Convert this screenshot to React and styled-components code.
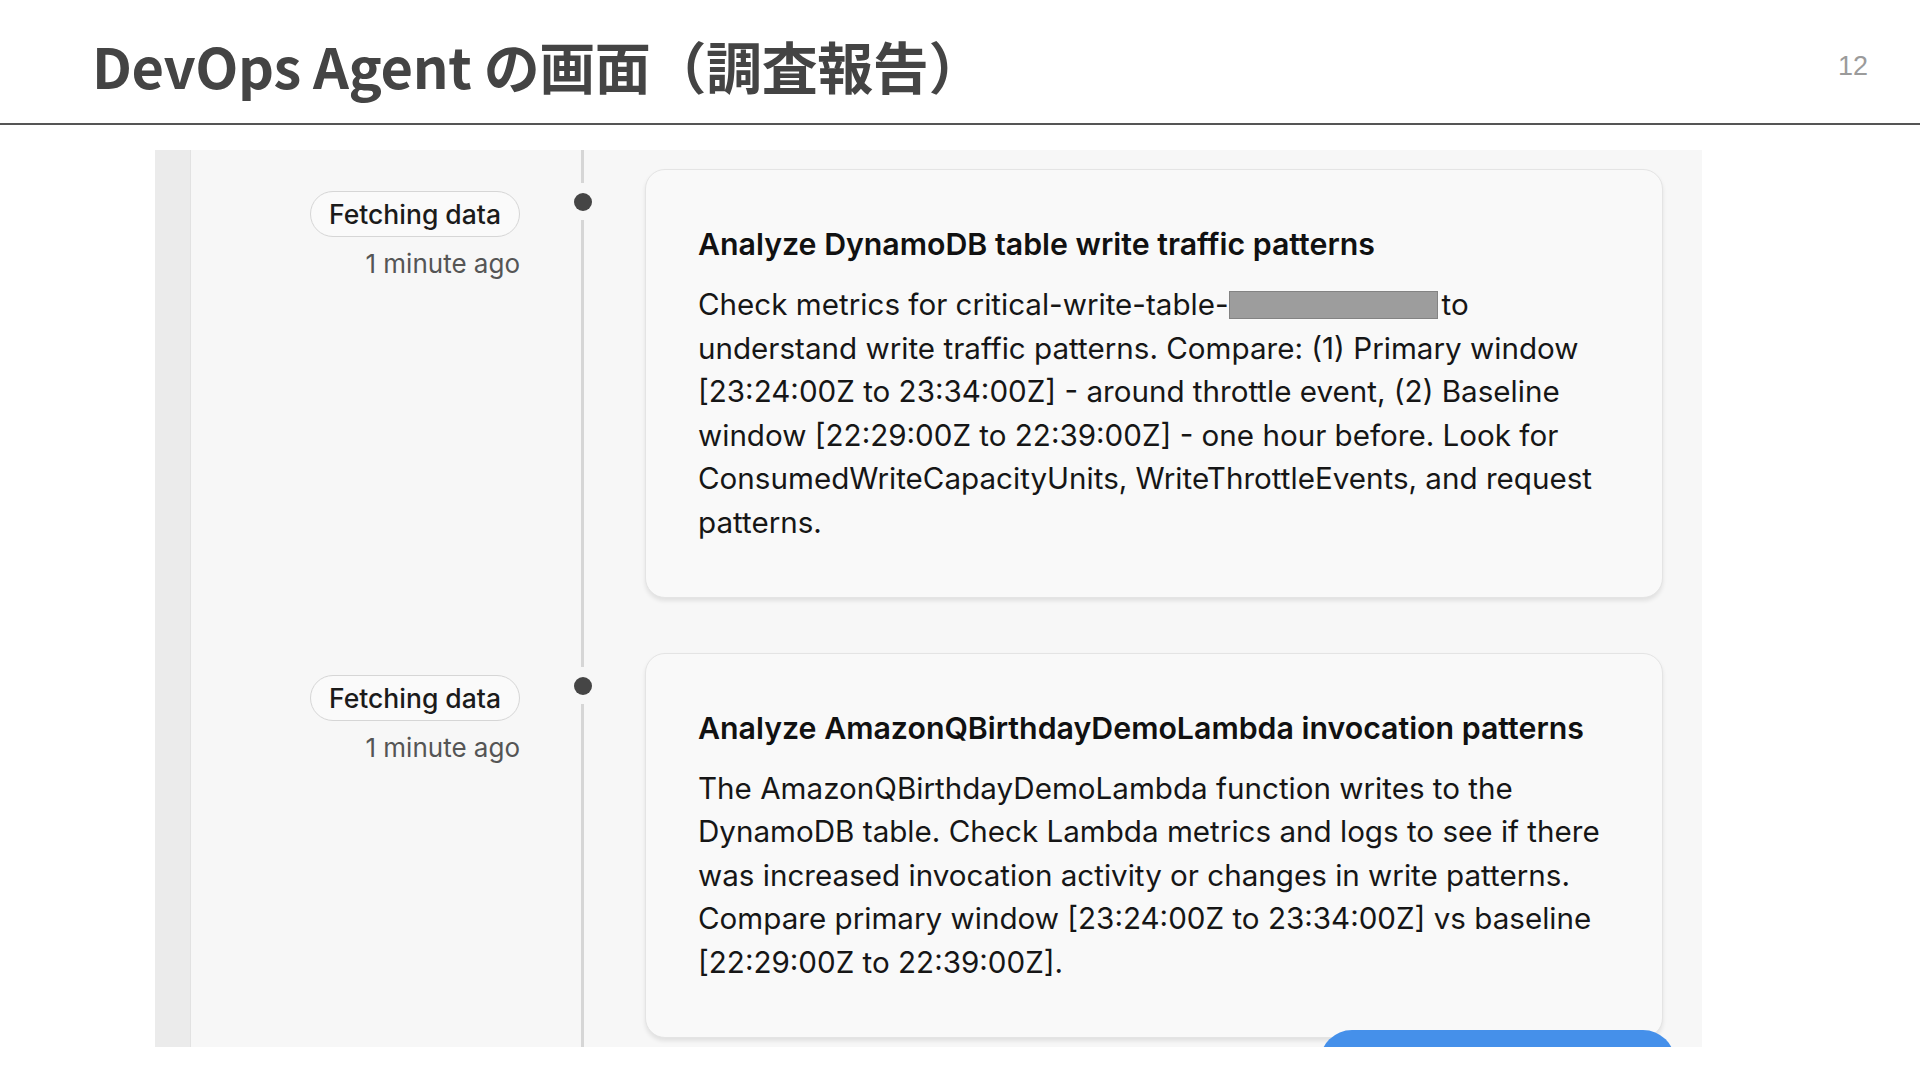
import React from 'react';
import styled, { createGlobalStyle } from 'styled-components';

const GlobalStyle = createGlobalStyle`
  html, body {
    margin: 0;
    padding: 0;
    background: #ffffff;
  }
  body {
    width: 1920px;
    height: 1080px;
    overflow: hidden;
  }
`;

const steps = [
  {
    title: 'Analyze DynamoDB table write traffic patterns',
    lines: [
      ['Check metrics for critical-write-table-', 'REDACT', 'to'],
      ['understand write traffic patterns. Compare: (1) Primary window'],
      ['[23:24:00Z to 23:34:00Z] - around throttle event, (2) Baseline'],
      ['window [22:29:00Z to 22:39:00Z] - one hour before. Look for'],
      ['ConsumedWriteCapacityUnits, WriteThrottleEvents, and request'],
      ['patterns.'],
    ],
  },
  {
    title: 'Analyze AmazonQBirthdayDemoLambda invocation patterns',
    lines: [
      ['The AmazonQBirthdayDemoLambda function writes to the'],
      ['DynamoDB table. Check Lambda metrics and logs to see if there'],
      ['was increased invocation activity or changes in write patterns.'],
      ['Compare primary window [23:24:00Z to 23:34:00Z] vs baseline'],
      ['[22:29:00Z to 22:39:00Z].'],
    ],
  },
];

const Page = styled.div`
  width: 1920px;
  height: 1080px;
  display: flex;
  flex-direction: column;
`;

const Header = styled.header`
  height: 125px;
  border-bottom: 2px solid #555555;
  display: flex;
  align-items: center;
  justify-content: space-between;
  padding: 6px 52px 0 92px;
  box-sizing: border-box;
  flex: none;
`;

const Title = styled.h1`
  margin: 0;
  font-family: "Noto Sans CJK JP", "Noto Sans", sans-serif;
  font-weight: 700;
  font-size: 56px;
  letter-spacing: -0.4px;
  color: #444444;
`;

const PageNo = styled.span`
  margin-top: 4px;
  font-family: "Liberation Sans", Arial, sans-serif;
  font-size: 27px;
  color: #9b9b9b;
`;

const Shot = styled.section`
  position: relative;
  margin: 25px 0 0 155px;
  width: 1547px;
  height: 897px;
  background: #f7f7f7;
  display: flex;
  overflow: hidden;
  font-family: Inter, "Noto Sans", sans-serif;
`;

const Strip = styled.div`
  width: 35px;
  flex: none;
  background: #ebebeb;
  border-right: 1px solid #e2e2e2;
`;

const Timeline = styled.div`
  display: flex;
  flex-direction: column;
`;

const Row = styled.div`
  display: grid;
  grid-template-columns: 329px 125px 1018px;
`;

const Meta = styled.div`
  padding-top: 41px;
  display: flex;
  flex-direction: column;
  align-items: flex-end;
`;

const Badge = styled.span`
  height: 46px;
  box-sizing: border-box;
  padding: 0 18px;
  border: 1.5px solid #d6d6d6;
  border-radius: 24px;
  background: #fafafa;
  display: flex;
  align-items: center;
  font-size: 26.5px;
  font-weight: 500;
  color: #1b1b1b;
`;

const Time = styled.span`
  margin-top: 12px;
  font-size: 26px;
  line-height: 30px;
  color: #555555;
`;

const Rail = styled.div`
  display: flex;
  flex-direction: column;
  align-items: center;
`;

const Segment = styled.div`
  width: 3px;
  background: #d6d6d6;
  height: ${(p) => (p.$grow ? 'auto' : '33px')};
  flex: ${(p) => (p.$grow ? '1' : 'none')};
`;

const Dot = styled.div`
  width: 18px;
  height: 18px;
  border-radius: 50%;
  background: #454545;
  margin: 10px 0 9px;
  flex: none;
`;

const CardCell = styled.div`
  padding: 19px 0 36px;
`;

const Card = styled.article`
  box-sizing: border-box;
  width: 1018px;
  padding: 57px 50px 52px 52px;
  background: #f9f9f9;
  border: 1px solid #e4e4e4;
  border-radius: 20px;
  box-shadow: 0 3px 4px rgba(0, 0, 0, 0.09);
`;

const CardTitle = styled.h3`
  margin: 0 0 22px;
  font-size: 30.3px;
  line-height: 34px;
  font-weight: 600;
  color: #111111;
  white-space: nowrap;
`;

const Body = styled.p`
  margin: 0;
  font-size: 29.6px;
  line-height: 43.6px;
  color: #161616;
  white-space: nowrap;
`;

const Redact = styled.span`
  display: inline-block;
  width: 209px;
  height: 28px;
  box-sizing: border-box;
  margin-right: 4px;
  vertical-align: -4px;
  background: #9d9d9d;
  border: 1px solid #838383;
`;

const FloatButton = styled.div`
  position: absolute;
  left: 1165px;
  top: 880px;
  width: 355px;
  height: 64px;
  border-radius: 32px;
  background: #4590ea;
`;

const Step = ({ step }) => (
  <Row>
    <Meta>
      <Badge>Fetching data</Badge>
      <Time>1 minute ago</Time>
    </Meta>
    <Rail>
      <Segment />
      <Dot />
      <Segment $grow />
    </Rail>
    <CardCell>
      <Card>
        <CardTitle>{step.title}</CardTitle>
        <Body>
          {step.lines.map((parts, i) => (
            <React.Fragment key={i}>
              {parts.map((part, j) =>
                part === 'REDACT' ? <Redact key={j} /> : <React.Fragment key={j}>{part}</React.Fragment>
              )}
              {i < step.lines.length - 1 && <br />}
            </React.Fragment>
          ))}
        </Body>
      </Card>
    </CardCell>
  </Row>
);

export default function App() {
  return (
    <Page>
      <GlobalStyle />
      <Header>
        <Title>DevOps Agent の画面（調査報告）</Title>
        <PageNo>12</PageNo>
      </Header>
      <Shot>
        <Strip />
        <Timeline>
          {steps.map((step, i) => (
            <Step key={i} step={step} />
          ))}
        </Timeline>
        <FloatButton />
      </Shot>
    </Page>
  );
}
